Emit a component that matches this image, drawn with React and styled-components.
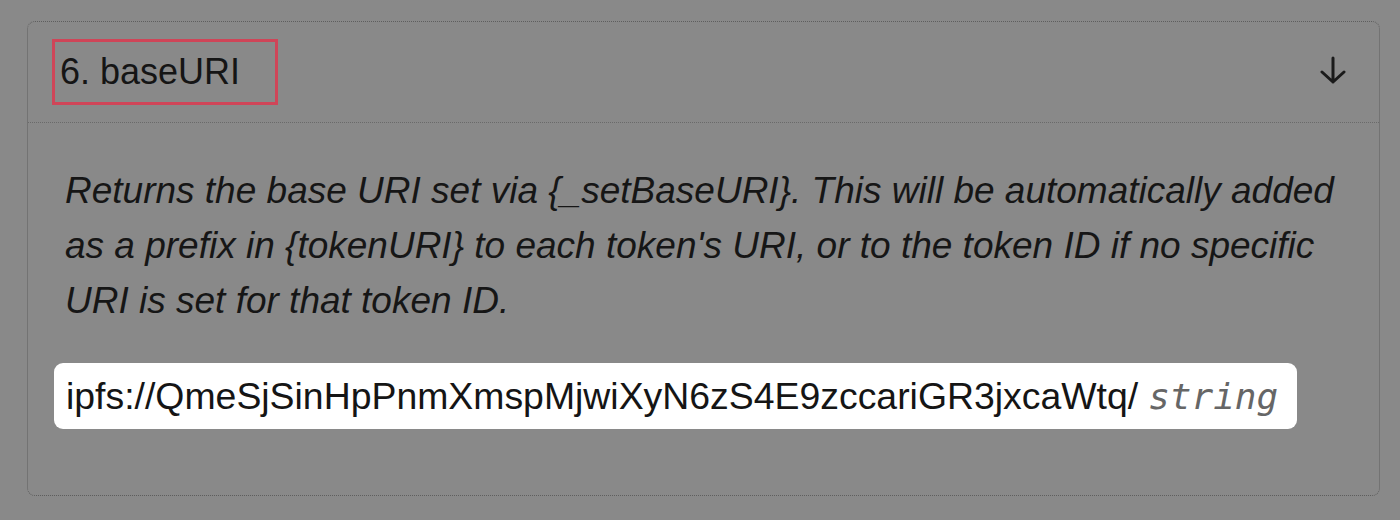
import React from 'react';
import styled, {createGlobalStyle} from 'styled-components';

const GlobalStyle = createGlobalStyle`
  html, body {
    margin: 0;
    padding: 0;
    background: #898989;
    font-family: "Liberation Sans", Arial, sans-serif;
  }
`;

const Page = styled.div`
  padding: 21px 20px 24px 27px;
`;

const Card = styled.section`
  width: 1353px;
  height: 475px;
  box-sizing: border-box;
  border: 1px dotted #5e5e5e;
  border-radius: 8px;
  display: flex;
  flex-direction: column;
`;

const Header = styled.header`
  height: 101px;
  box-sizing: border-box;
  display: flex;
  align-items: center;
  justify-content: space-between;
  padding: 0 32px 4px 24px;
  border-bottom: 1px dotted #6a6a6a;
`;

const Title = styled.h3`
  margin: 4px 0 0;
  width: 226px;
  height: 66px;
  box-sizing: border-box;
  border: 3px solid #cf4558;
  display: flex;
  align-items: center;
  padding-left: 5px;
  font-size: 36px;
  font-weight: 400;
  color: #151515;
`;

const Body = styled.div`
  padding: 40px 20px 0 37px;
`;

const Description = styled.p`
  margin: 0;
  font-size: 37px;
  line-height: 55px;
  font-style: italic;
  color: #161616;
  white-space: nowrap;
`;

const Value = styled.div`
  display: inline-flex;
  align-items: center;
  gap: 10px;
  margin: 35px 0 0 -11px;
  height: 66px;
  padding: 0 19px 0 12px;
  background: #fff;
  border-radius: 9px;
  font-size: 37.4px;
  color: #151515;
`;

const Type = styled.span`
  font-family: "DejaVu Sans Mono", "Liberation Mono", monospace;
  font-style: italic;
  font-size: 36px;
  color: #666;
`;

const ArrowDown = () => (
  <svg width="28" height="28" viewBox="0 0 28 28" fill="none" stroke="#1a1a1a" strokeWidth="3" strokeLinecap="round" strokeLinejoin="round">
    <path d="M14 2v24M3 16l11 10 11-10" />
  </svg>
);

const App = () => (
  <React.Fragment>
    <GlobalStyle />
    <Page>
      <Card>
        <Header>
          <Title>6. baseURI</Title>
          <ArrowDown />
        </Header>
        <Body>
          <Description>
            Returns the base URI set via {'{_setBaseURI}'}. This will be automatically added<br />
            as a prefix in {'{tokenURI}'} to each token's URI, or to the token ID if no specific<br />
            URI is set for that token ID.
          </Description>
          <Value>
            ipfs://QmeSjSinHpPnmXmspMjwiXyN6zS4E9zccariGR3jxcaWtq/
            <Type>string</Type>
          </Value>
        </Body>
      </Card>
    </Page>
  </React.Fragment>
);

export default App;
